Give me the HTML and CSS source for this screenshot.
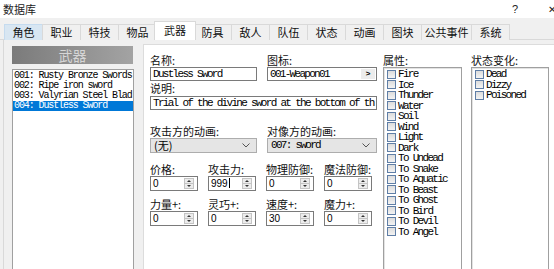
FILE: index.html
```html
<!DOCTYPE html>
<html lang="zh-CN">
<head>
    <meta charset="UTF-8">
    <meta name="viewport" content="width=device-width, initial-scale=1.0">
    <title>数据库</title>
    <link rel="stylesheet" href="styles.css">
</head>
<body>
    <div class="titlebar">
        <span class="title">数据库</span>
        <span class="help">?</span>
        <span class="close">✕</span>
    </div>

    <div class="tabs">
        <div class="tab hover">角色</div>
        <div class="tab">职业</div>
        <div class="tab">特技</div>
        <div class="tab">物品</div>
        <div class="tab active">武器</div>
        <div class="tab">防具</div>
        <div class="tab">敌人</div>
        <div class="tab">队伍</div>
        <div class="tab">状态</div>
        <div class="tab">动画</div>
        <div class="tab">图块</div>
        <div class="tab wide">公共事件</div>
        <div class="tab">系统</div>
    </div>

    <div class="page">
        <div class="side">
            <div class="side-head">武器</div>
            <ul class="list">
                <li>001: Rusty Bronze Swords</li>
                <li>002: Ripe iron sword</li>
                <li>003: Valyrian Steel Blad</li>
                <li class="selected">004: Dustless Sword</li>
            </ul>
        </div>

        <div class="editor">
            <div class="fields">
                <div class="row row-top">
                    <div class="field half">
                        <label>名称:</label>
                        <div class="input mono">Dustless Sword</div>
                    </div>
                    <div class="field half">
                        <label>图标:</label>
                        <div class="input mono icon-input">
                            <span>001-Weapon01</span>
                            <span class="pick">&gt;</span>
                        </div>
                    </div>
                </div>

                <div class="row">
                    <div class="field full">
                        <label>说明:</label>
                        <div class="input mono">Trial of the divine sword at the bottom of th</div>
                    </div>
                </div>

                <div class="row row-anim">
                    <div class="field half">
                        <label>攻击方的动画:</label>
                        <div class="select"><span>(无)</span><svg width="8" height="5" viewBox="0 0 8 5"><path d="M0.5 0.5 L4 4 L7.5 0.5" fill="none" stroke="#555" stroke-width="1"/></svg></div>
                    </div>
                    <div class="field half">
                        <label>对像方的动画:</label>
                        <div class="select"><span class="mono">007: sword</span><svg width="8" height="5" viewBox="0 0 8 5"><path d="M0.5 0.5 L4 4 L7.5 0.5" fill="none" stroke="#555" stroke-width="1"/></svg></div>
                    </div>
                </div>

                <div class="row row-stats">
                    <div class="field quarter">
                        <label>价格:</label>
                        <div class="spin"><span>0</span><i class="arrows"></i></div>
                    </div>
                    <div class="field quarter">
                        <label>攻击力:</label>
                        <div class="spin"><span>999<b class="caret"></b></span><i class="arrows"></i></div>
                    </div>
                    <div class="field quarter">
                        <label>物理防御:</label>
                        <div class="spin"><span>0</span><i class="arrows"></i></div>
                    </div>
                    <div class="field quarter">
                        <label>魔法防御:</label>
                        <div class="spin"><span>0</span><i class="arrows"></i></div>
                    </div>
                </div>

                <div class="row row-bonus">
                    <div class="field quarter">
                        <label>力量+:</label>
                        <div class="spin"><span>0</span><i class="arrows"></i></div>
                    </div>
                    <div class="field quarter">
                        <label>灵巧+:</label>
                        <div class="spin"><span>0</span><i class="arrows"></i></div>
                    </div>
                    <div class="field quarter">
                        <label>速度+:</label>
                        <div class="spin"><span>30</span><i class="arrows"></i></div>
                    </div>
                    <div class="field quarter">
                        <label>魔力+:</label>
                        <div class="spin"><span>0</span><i class="arrows"></i></div>
                    </div>
                </div>
            </div>

            <div class="group attrs">
                <label>属性:</label>
                <ul class="checks">
                    <li><span class="box"></span>Fire</li>
                    <li><span class="box"></span>Ice</li>
                    <li><span class="box"></span>Thunder</li>
                    <li><span class="box"></span>Water</li>
                    <li><span class="box"></span>Soil</li>
                    <li><span class="box"></span>Wind</li>
                    <li><span class="box"></span>Light</li>
                    <li><span class="box"></span>Dark</li>
                    <li><span class="box"></span>To Undead</li>
                    <li><span class="box"></span>To Snake</li>
                    <li><span class="box"></span>To Aquatic</li>
                    <li><span class="box"></span>To Beast</li>
                    <li><span class="box"></span>To Ghost</li>
                    <li><span class="box"></span>To Bird</li>
                    <li><span class="box"></span>To Devil</li>
                    <li><span class="box"></span>To Angel</li>
                </ul>
            </div>

            <div class="group states">
                <label>状态变化:</label>
                <ul class="checks">
                    <li><span class="box"></span>Dead</li>
                    <li><span class="box"></span>Dizzy</li>
                    <li><span class="box"></span>Poisoned</li>
                </ul>
            </div>
        </div>
    </div>
</body>
</html>
```

FILE: styles.css
```css
* {
    margin: 0;
    padding: 0;
    box-sizing: border-box;
}
body {
    width: 554px;
    height: 269px;
    overflow: hidden;
    background: #f0f0f0;
    font-family: "Noto Sans CJK SC", "Noto Sans", sans-serif;
    font-size: 11px;
    color: #000;
}
ul {
    list-style: none;
}
.mono {
    font-family: "Liberation Mono", monospace;
    font-size: 11px;
    letter-spacing: -1.7px;
}

/* title bar */
.titlebar {
    height: 18px;
    background: #fff;
    display: flex;
    align-items: center;
    padding-left: 3px;
}
.title {
    color: #222;
    line-height: 18px;
}
.help {
    margin-left: auto;
    font-family: "Liberation Sans", sans-serif;
    font-size: 11px;
    color: #222;
}
.close {
    margin-left: 30px;
    margin-right: -4px;
    width: 10px;
    font-family: "DejaVu Sans", sans-serif;
    font-size: 10px;
    color: #222;
}

/* tabs */
.tabs {
    height: 22px;
    display: flex;
    align-items: flex-end;
    padding-left: 4px;
    border-bottom: 1px solid #d9d9d9;
}
.tab {
    width: 39px;
    height: 16px;
    margin-right: -1px;
    margin-bottom: -1px;
    border: 1px solid #d9d9d9;
    border-bottom: none;
    background: #f0f0f0;
    text-align: center;
    line-height: 14px;
    color: #111;
}
.tab.wide {
    width: 51px;
}
.tab.hover {
    background: #d8e6f2;
    border-color: #c5dbef;
}
.tab.active {
    position: relative;
    z-index: 1;
    width: 42px;
    height: 19px;
    margin: 0 -3px -1px -2px;
    background: #fff;
    line-height: 17px;
}

/* page */
.page {
    height: 229px;
    display: flex;
    margin-left: 3px;
    border-left: 1px solid #d9d9d9;
}
.side {
    width: 139px;
    padding: 6px 0 0 8px;
    background: #f0f0f0;
}
.side-head {
    width: 121px;
    height: 18px;
    background: linear-gradient(to right, #7b7b7b, #a3a3a3);
    color: #d6d6d6;
    font-size: 14px;
    line-height: 18px;
    text-align: center;
}
.list {
    width: 122px;
    height: 210px;
    margin-top: 5px;
    padding-top: 1px;
    background: #fff;
    border: 1px solid #a0a0a0;
    overflow: hidden;
    white-space: nowrap;
}
.list li {
    height: 10px;
    line-height: 10px;
    padding-left: 1px;
    font-family: "Liberation Mono", monospace;
    font-size: 10px;
    letter-spacing: -1.1px;
}
.list li.selected {
    background: #0078d7;
    color: #fff;
}

/* editor */
.editor {
    flex: 1;
    display: flex;
    margin-top: 4px;
    padding: 9px 0 0 6px;
    background: #fff;
    border-top: 1px solid #dcdcdc;
    border-left: 1px solid #dcdcdc;
}
label {
    display: block;
    height: 13px;
    line-height: 12px;
    color: #111;
    white-space: nowrap;
}
.fields {
    width: 227px;
}
.row {
    display: flex;
    gap: 10px;
}
.row-anim {
    margin-top: 15px;
}
.row-stats {
    margin-top: 10px;
    gap: 9px;
}
.row-bonus {
    margin-top: 7px;
    gap: 9px;
}
.field.half {
    width: 107px;
}
.field.half + .field.half {
    width: 110px;
}
.field.full {
    width: 227px;
    margin-top: 1px;
}
.field.full label {
    margin-bottom: 1px;
}
.field.quarter {
    width: 49px;
}
.input {
    height: 14px;
    border: 1px solid #7a7a7a;
    padding-left: 2px;
    line-height: 12px;
    white-space: nowrap;
    overflow: hidden;
}
.icon-input {
    display: flex;
    justify-content: space-between;
    padding-right: 1px;
}
.pick {
    width: 14px;
    margin: 1px 0;
    background: #ececec;
    font-family: "Liberation Sans", sans-serif;
    font-weight: bold;
    font-size: 8px;
    line-height: 10px;
    text-align: center;
    letter-spacing: 0;
}
.select {
    height: 15px;
    display: flex;
    align-items: center;
    justify-content: space-between;
    padding: 0 6px 0 3px;
    background: #e5e5e5;
    border: 1px solid #adadad;
    line-height: 13px;
}
.spin {
    width: 48px;
    height: 15px;
    display: flex;
    align-items: center;
    justify-content: space-between;
    padding: 0 3px 0 2px;
    border: 1px solid #7a7a7a;
    font-family: "Liberation Sans", sans-serif;
    font-size: 10px;
}
.caret {
    display: inline-block;
    width: 1px;
    height: 10px;
    margin-left: 1px;
    background: #000;
    vertical-align: -1px;
}
.arrows {
    width: 10px;
    height: 11px;
    border: 1px solid #c4c4c4;
    background:
        linear-gradient(#c4c4c4, #c4c4c4) 0 4px / 100% 1px no-repeat,
        #ececec;
    position: relative;
}
.arrows::before,
.arrows::after {
    content: "";
    position: absolute;
    left: 2px;
    border-left: 2px solid transparent;
    border-right: 2px solid transparent;
}
.arrows::before {
    top: 1px;
    border-bottom: 2px solid #333;
}
.arrows::after {
    top: 6px;
    border-top: 2px solid #333;
}

/* attribute lists */
.group {
    margin-left: 6px;
}
.group.states {
    margin-left: 9px;
}
.checks {
    width: 79px;
    height: 203px;
    padding-top: 1px;
    border: 1px solid #a0a0a0;
    box-shadow: inset 1px 1px 0 #e3e3e3;
    background: #fff;
}
.states .checks {
    width: 78px;
}
.checks li {
    height: 10.5px;
    line-height: 10px;
    display: flex;
    align-items: center;
    padding-left: 3px;
    font-family: "Liberation Mono", monospace;
    font-size: 11px;
    letter-spacing: -1.7px;
    white-space: nowrap;
}
.box {
    width: 9px;
    height: 9px;
    margin-right: 2px;
    border: 1px solid #5f7ea6;
    background: linear-gradient(#dcdcdc, #f3f3f3);
    flex: none;
}
```
